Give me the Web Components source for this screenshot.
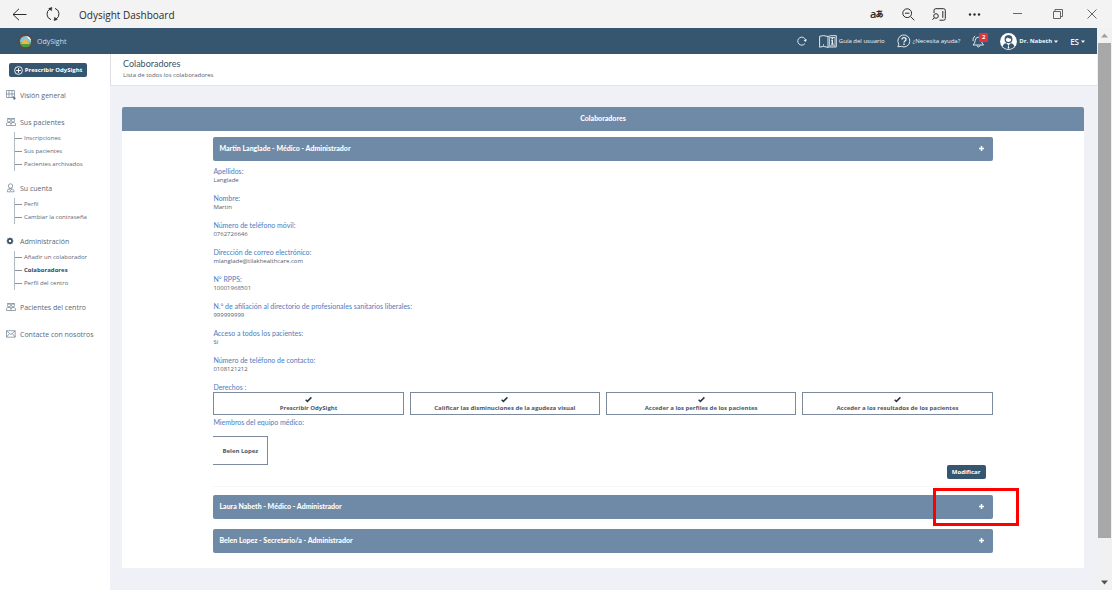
<!DOCTYPE html>
<html lang="es">
<head>
<meta charset="utf-8">
<title>Odysight Dashboard</title>
<style>
  html, body { margin: 0; }
  body { font-family: "Open Sans", "Noto Sans", sans-serif; font-size: 7px; color: #52606f; background: #fff; }
</style>
</head>
<body>
<ody-app></ody-app>
<script>
const define = (name, html, setup) => {
  const template = document.createElement('template');
  template.innerHTML = '<style>*{box-sizing:border-box}button{font:inherit;color:inherit;background:none;border:0;padding:0;margin:0}a{color:inherit;text-decoration:none}svg{display:block;fill:none;stroke:currentColor;flex:none}svg.solid{stroke:none}</style>' + html;
  customElements.define(name, class extends HTMLElement {
    constructor() {
      super();
      this.attachShadow({ mode: 'open' }).appendChild(template.content.cloneNode(true));
    }
    connectedCallback() { if (setup) setup(this, this.shadowRoot); }
  });
};

const peopleIcon = '<svg width="10" height="8" viewBox="0 0 10 8" stroke-width=".7"><circle cx="3" cy="2.4" r="1.6"/><circle cx="7" cy="2.4" r="1.6"/><path d="M.5 7.5V5.8Q.5 4.4 3 4.4T5 6M5 7.5V5.8Q5 4.4 7 4.4T9.5 5.8V7.5ZM.5 7.5H5M1 .6H9"/></svg>';
const navIcons = {
  overview: '<svg width="10" height="10" viewBox="0 0 10 10" stroke-width=".7"><path d="M.5.5H8.5V7.5H.5ZM.5 4H8.5M3 .5V7.5M6 .5V7.5"/><path d="M7 6.5L9.6 8.2 8 9.7Z" fill="currentColor"/></svg>',
  people: peopleIcon,
  user: '<svg width="10" height="10" viewBox="0 0 10 10" stroke-width=".7"><circle cx="4.5" cy="3" r="2.2"/><path d="M1.4 8.8V7.6Q1.6 5.6 4.5 5.6T8 7.6V8.8ZM3.4 6L4.6 7.6 5.8 6"/></svg>',
  gear: '<svg width="10" height="8" viewBox="0 0 10 8" style="color:#2f4a61"><circle cx="4" cy="4" r="2.1" stroke-width="1.6"/><path d="M4 .6V1.4M4 6.6V7.4M.6 4H1.4M6.6 4H7.4M1.6 1.6L2.2 2.2M6.4 1.6L5.8 2.2M1.6 6.4L2.2 5.8M6.4 6.4L5.8 5.8" stroke-width="1"/></svg>',
  mail: '<svg width="10" height="8" viewBox="0 0 10 8" stroke-width=".7"><path d="M.5.7H9.2V7.2H.5ZM.5.9L4.9 4.5 9.2.9M.5 7L3.5 3.6M9.2 7L6.3 3.6"/></svg>'
};

define('title-bar', `
<style>
:host{display:flex;align-items:center;height:28px;padding:0 15px 0 12px;background:#f3f3f3;color:#2b2b2b;font-size:10px}
.left,.right{display:flex;align-items:center}
.right{margin-left:auto;gap:18px}
.left{gap:19px}
.tools{display:flex;align-items:center;gap:17px;margin-right:3px}
span{margin-top:2px}
.window{color:#666}
.lang{display:flex;align-items:center;font-family:"Open Sans","Noto Sans CJK JP",sans-serif;font-size:11px;line-height:14px;font-weight:600;height:14px;width:15px}
.lang b{font-size:8px;margin-left:-1px}
</style>
<div class="left">
  <button aria-label="Atrás"><svg width="15" height="13" viewBox="0 0 15 13"><path d="M7 .8L1 6.5 7 12.2M1 6.5H14.5"/></svg></button>
  <button aria-label="Actualizar"><svg width="14" height="16" viewBox="0 0 14 16"><path d="M5 13.6A5.8 5.8 0 0 1 4 3M9 2.4A5.8 5.8 0 0 1 10 13"/><path d="M2.6 2.6L6 1.3 5.5 4.8ZM11.4 13.4L8 14.7 8.5 11.2Z" fill="currentColor" stroke-width=".4"/></svg></button>
  <span>Odysight Dashboard</span>
</div>
<div class="right">
  <div class="tools">
  <button class="lang" aria-label="Traducir">a<b>あ</b></button>
  <button aria-label="Alejar"><svg width="13" height="13" viewBox="0 0 13 13"><circle cx="5.2" cy="5.2" r="4.4"/><path d="M8.5 8.5L12.3 12.3M3 5.2H7.4"/></svg></button>
  <button aria-label="Buscar en la página"><svg width="14" height="13" viewBox="0 0 14 13"><path d="M2 5V2.5Q2 .7 3.8.7H11.5Q13.3.7 13.3 2.5V10.5Q13.3 12.2 11.5 12.2H7.5M10.8 3V9.8"/><circle cx="4" cy="8" r="2.3"/><path d="M2.3 9.7L.5 11.8"/></svg></button>
  <button aria-label="Más"><svg width="23" height="3" viewBox="0 0 23 3"><g fill="currentColor" stroke="none"><circle cx="7" cy="1.5" r="1.2"/><circle cx="11.5" cy="1.5" r="1.2"/><circle cx="16" cy="1.5" r="1.2"/></g></svg></button>
  </div>
  <button class="window" aria-label="Minimizar"><svg width="22" height="10" viewBox="0 0 22 10"><path d="M6 4.5H15"/></svg></button>
  <button class="window" aria-label="Maximizar"><svg width="22" height="10" viewBox="0 0 22 10"><path d="M6.5 2.5H13.5V9.5H6.5ZM8 2.5V.5H15.5V7.5H13.5"/></svg></button>
  <button class="window" aria-label="Cerrar"><svg width="10" height="10" viewBox="0 0 10 10"><path d="M.5.5L9.5 9.5M9.5.5L.5 9.5"/></svg></button>
</div>`);

define('top-bar', `
<style>
:host{display:flex;align-items:center;justify-content:space-between;height:26px;padding:0 12px 0 18px;background:#36556f;color:#f2f6f9;font-size:6px}
a,button{display:flex;align-items:center;gap:2px;white-space:nowrap}
nav{display:flex;align-items:center;gap:12px}
.brand{gap:4px;font-size:7px;color:#d5dee6}
.bell{position:relative;width:16px}
.badge{position:absolute;left:7px;top:-2px;width:9px;height:9px;border-radius:1px;background:#e3323b;color:#fff;font-size:6px;line-height:9px;text-align:center;font-weight:700}
.user{font-weight:700}
.lang{font-size:8px;font-weight:600}
</style>
<a class="brand" href="#"><svg class="solid" width="15" height="15" viewBox="0 0 15 15"><circle cx="7.5" cy="7.5" r="7.4" fill="#5a4a3c"/><circle cx="7.5" cy="7.5" r="5.6" fill="#7fc4e6"/><path d="M2 8.8A5.6 5.6 0 0 0 13 8.8L10 8.4 4 8Z" fill="#4f9a45"/><path d="M2.8 10L7.2 4.2 12 10Z" fill="#f0b840"/><path d="M8 2A5.6 5.6 0 0 1 13 7L10 4Z" fill="#fff"/></svg>OdySight</a>
<nav>
  <button aria-label="Recargar"><svg width="10" height="10" viewBox="0 0 10 10"><path d="M8 7.5A4 4 0 1 1 8.6 4" stroke-width=".9"/><path d="M9.8 3.2L8.8 6 6.6 4.2Z" fill="currentColor" stroke="none"/></svg></button>
  <a href="#"><svg width="18" height="13" viewBox="0 0 18 13"><path d="M.6 1.3L4.5.6 9 1.5V12.4L4.5 11.4.6 12.2ZM9 1.5L12 .7H17.3V12H9" stroke-width=".9"/><path d="M10.5 2.5H16V10.8H10.5Z" stroke-width=".7"/><path d="M13.3 5.3V9M12.3 5.3H13.8M12.2 9.2H14.6" stroke-width="1.3"/><circle cx="13.3" cy="3.4" r=".9" fill="currentColor" stroke="none"/><path d="M4.5 9V11.3" stroke-width=".6"/></svg>Guía del usuario</a>
  <a href="#"><svg width="14" height="14" viewBox="0 0 14 14"><path d="M1.8 10.2A6 6 0 1 1 4.3 12.4L.8 12.8Z" stroke-width=".9"/><path d="M5 5.5Q5 3.7 7 3.7T9 5.4Q9 6.4 7.9 7 7 7.5 7 8.6M7 9.6V10.9" stroke-width="1.3"/></svg>¿Necesita ayuda?</a>
  <button class="bell" aria-label="Notificaciones"><svg width="13" height="13" viewBox="0 0 13 13"><path d="M1 10H11.5Q9.6 8.4 9.6 5.5 9.4 2.2 6.4 2.2T3.2 5.5Q3 8.4 1 10ZM5 10.4Q5.2 12 6.4 12T7.8 10.4M1 6Q.6 3 3 .9" stroke-width=".9"/></svg><span class="badge">2</span></button>
  <button class="user"><svg class="solid" width="17" height="17" viewBox="0 0 17 17"><circle cx="8.5" cy="8.5" r="8.4" fill="#fff"/><circle cx="8.5" cy="6.3" r="3.3" fill="#fff" stroke="#36556f" stroke-width="1.3"/><path d="M5.2 5.8Q5 2.6 8.5 2.6T11.8 5.8Q9 5.8 7.6 4.6 6.6 5.8 5.2 5.8Z" fill="#36556f"/><path d="M2.6 13.8Q3 10.6 6.4 10.2L8.5 12.4 10.6 10.2Q14 10.6 14.4 13.8 12 16.2 8.5 16.2T2.6 13.8Z" fill="#36556f"/><path d="M8.5 11.5L9.4 15.5H7.6Z" fill="#fff"/></svg>Dr. Nabeth<svg class="solid" width="4" height="3" viewBox="0 0 4 3"><path d="M0 .5H4L2 3Z" fill="currentColor"/></svg></button>
  <button class="lang">ES<svg class="solid" width="4" height="3" viewBox="0 0 4 3"><path d="M0 .5H4L2 3Z" fill="currentColor"/></svg></button>
</nav>`);

define('nav-group', `
<style>
:host{display:block}
.title{display:flex;align-items:center;gap:4px;height:20px;padding-left:6px;white-space:nowrap}
.title svg{color:#6c7c8c}
.subs{display:block;margin-left:14px;border-left:1px solid #b3bac1}
</style>
<a class="title" href="#"><i></i><span></span></a>
<div class="subs"><slot></slot></div>`, (host, root) => {
  root.querySelector('i').innerHTML = navIcons[host.getAttribute('icon')];
  root.querySelector('span').textContent = host.getAttribute('label');
});

define('nav-link', `
<style>
:host{display:block;height:13px;font-size:6px;line-height:13px;white-space:nowrap}
a{display:flex;align-items:center;gap:2px}
a::before{content:"";width:7px;height:1px;background:#8b959f}
:host([current]){font-weight:700;color:#34495d}
</style>
<a href="#"><slot></slot></a>`);

define('side-nav', `
<style>
:host{display:block;width:110px;background:#fff;color:#5b6876}
.new{display:flex;align-items:center;justify-content:center;gap:2px;width:78px;height:14px;margin:9px 0 8px 9px;border-radius:2px;background:#36556f;color:#fff;font-size:6px;font-weight:700;white-space:nowrap}
nav{display:flex;flex-direction:column;gap:7px}
</style>
<button class="new"><svg width="9" height="9" viewBox="0 0 9 9"><circle cx="4.5" cy="4.5" r="3.9" stroke-width=".9"/><path d="M4.5 2.2V6.8M2.2 4.5H6.8"/></svg>Prescribir OdySight</button>
<nav>
  <nav-group icon="overview" label="Visión general"></nav-group>
  <nav-group icon="people" label="Sus pacientes"><nav-link>Inscripciones</nav-link><nav-link>Sus pacientes</nav-link><nav-link>Pacientes archivados</nav-link></nav-group>
  <nav-group icon="user" label="Su cuenta"><nav-link>Perfil</nav-link><nav-link>Cambiar la contraseña</nav-link></nav-group>
  <nav-group icon="gear" label="Administración"><nav-link>Añadir un colaborador</nav-link><nav-link current>Colaboradores</nav-link><nav-link>Perfil del centro</nav-link></nav-group>
  <nav-group icon="people" label="Pacientes del centro"></nav-group>
  <nav-group icon="mail" label="Contacte con nosotros"></nav-group>
</nav>`);

define('page-heading', `
<style>
:host{display:block;height:32px;padding:4px 12px;background:#fff;border-left:1px solid #dcdfe4;border-bottom:1px solid #e2e4e9}
h1{margin:0;font:400 9px/12px Lato,"Open Sans",sans-serif;color:#3c5168}
p{margin:0;font-size:6px;line-height:11px}
</style>
<h1>Colaboradores</h1><p>Lista de todos los colaboradores</p>`);

define('info-field', `
<style>
:host{display:block;height:27px}
dt{font:400 7px/9px Lato,"Open Sans",sans-serif;color:#4a7cc0}
dd{margin:0;font-size:6px;line-height:9px}
</style>
<dt></dt><dd><slot></slot></dd>`, (host, root) => {
  root.querySelector('dt').textContent = host.getAttribute('label');
});

define('right-card', `
<style>
:host{display:flex;flex-direction:column;align-items:center;height:23px;padding-top:3px;border:1px solid #7d8a9b;font-size:6px;font-weight:700;line-height:9px;gap:1px;color:#4b5867}
</style>
<svg width="7" height="7" viewBox="0 0 7 7" style="color:#2c3742"><path d="M.6 3.8L2.4 5.4 6.4 1.4" stroke-width="1.5"/></svg><slot></slot>`);

define('collab-item', `
<style>
:host{display:block}
.head{display:flex;align-items:center;justify-content:space-between;width:100%;height:24px;padding:0 8px 1px 6px;border-radius:2px;background:#6f8aa7;color:#fff;font:900 7px/9px Lato,"Open Sans",sans-serif}
</style>
<button class="head"><span></span><svg width="7" height="7" viewBox="0 0 7 7"><path d="M3.5 1V6M1 3.5H6" stroke-width="1.5"/></svg></button>
<slot></slot>`, (host, root) => {
  root.querySelector('span').textContent = host.getAttribute('label');
  root.querySelector('.head').setAttribute('aria-expanded', host.hasAttribute('open'));
});

define('collab-details', `
<style>
:host{display:block;padding-top:6px;border-bottom:1px solid #f5f6f8}
dl{margin:0}
h3{margin:0;font:400 7px/9px Lato,"Open Sans",sans-serif;color:#4a7cc0}
.rights{display:grid;grid-template-columns:repeat(4,1fr);gap:6px;margin-bottom:3px}
.member{display:flex;align-items:center;justify-content:center;width:55px;height:29px;margin-top:9px;border:1px solid #7d8a9b;border-left:0;font-size:6px;font-weight:700;color:#4b5867}
.actions{display:flex;justify-content:flex-end;padding:0 7px 7px 0}
.edit{width:39px;height:14px;border-radius:2px;background:#36556f;color:#fff;font-size:6px;font-weight:700}
</style>
<dl>
  <info-field label="Apellidos:">Langlade</info-field>
  <info-field label="Nombre:">Martin</info-field>
  <info-field label="Número de teléfono móvil:">0762726646</info-field>
  <info-field label="Dirección de correo electrónico:">mlanglade@tilakhealthcare.com</info-field>
  <info-field label="N° RPPS:">10001968501</info-field>
  <info-field label="N.° de afiliación al directorio de profesionales sanitarios liberales:">999999999</info-field>
  <info-field label="Acceso a todos los pacientes:">Sí</info-field>
  <info-field label="Número de teléfono de contacto:">0108121212</info-field>
</dl>
<h3>Derechos :</h3>
<div class="rights">
  <right-card>Prescribir OdySight</right-card>
  <right-card>Calificar las disminuciones de la agudeza visual</right-card>
  <right-card>Acceder a los perfiles de los pacientes</right-card>
  <right-card>Acceder a los resultados de los pacientes</right-card>
</div>
<h3>Miembros del equipo médico:</h3>
<div class="member">Belen Lopez</div>
<div class="actions"><button class="edit">Modificar</button></div>`);

define('collab-panel', `
<style>
:host{display:block;margin:21px 13px 0 12px;background:#fff}
h2{margin:0;height:24px;border-radius:2px 2px 0 0;background:#6f8aa7;color:#fff;font:900 7px/23px Lato,"Open Sans",sans-serif;text-align:center}
.list{display:flex;flex-direction:column;width:81%;margin:0 auto;padding:6px 0 15px}
.next{margin-top:8px}
.last{margin-top:10px}
.marked{position:relative}
.mark{position:absolute;top:-7px;right:-26px;width:86px;height:38px;border:3px solid #f00}
</style>
<h2>Colaboradores</h2>
<div class="list">
  <collab-item open label="Martin Langlade - Médico - Administrador"><collab-details></collab-details></collab-item>
  <div class="next marked"><collab-item label="Laura Nabeth - Médico - Administrador"></collab-item><div class="mark"></div></div>
  <collab-item class="last" label="Belen Lopez - Secretario/a - Administrador"></collab-item>
</div>`);

define('scroll-rail', `
<style>
:host{display:flex;flex-direction:column;align-items:center;width:15px;background:#f1f1f1;color:#505050}
svg{width:7px;height:15px}
.up{color:#a0a0a0}
.track{flex:1;width:13px}
.thumb{height:93%;background:#a8a8a8}
</style>
<svg class="up" viewBox="0 0 7 15"><path d="M0 9.5L3.5 5.5 7 9.5Z" fill="currentColor" stroke="none"/></svg>
<div class="track"><div class="thumb"></div></div>
<svg viewBox="0 0 7 15"><path d="M0 5.5L3.5 9.5 7 5.5Z" fill="currentColor" stroke="none"/></svg>`);

define('ody-app', `
<style>
:host{display:flex;flex-direction:column;min-height:100vh}
.view{flex:1;display:flex}
.site{flex:1;min-width:0;display:flex;flex-direction:column}
.cols{flex:1;display:flex}
main{flex:1;min-width:0;background:#f0f1f6}
</style>
<title-bar></title-bar>
<div class="view">
  <div class="site">
    <top-bar></top-bar>
    <div class="cols">
      <side-nav></side-nav>
      <main><page-heading></page-heading><collab-panel></collab-panel></main>
    </div>
  </div>
  <scroll-rail></scroll-rail>
</div>`);
</script>
</body>
</html>
